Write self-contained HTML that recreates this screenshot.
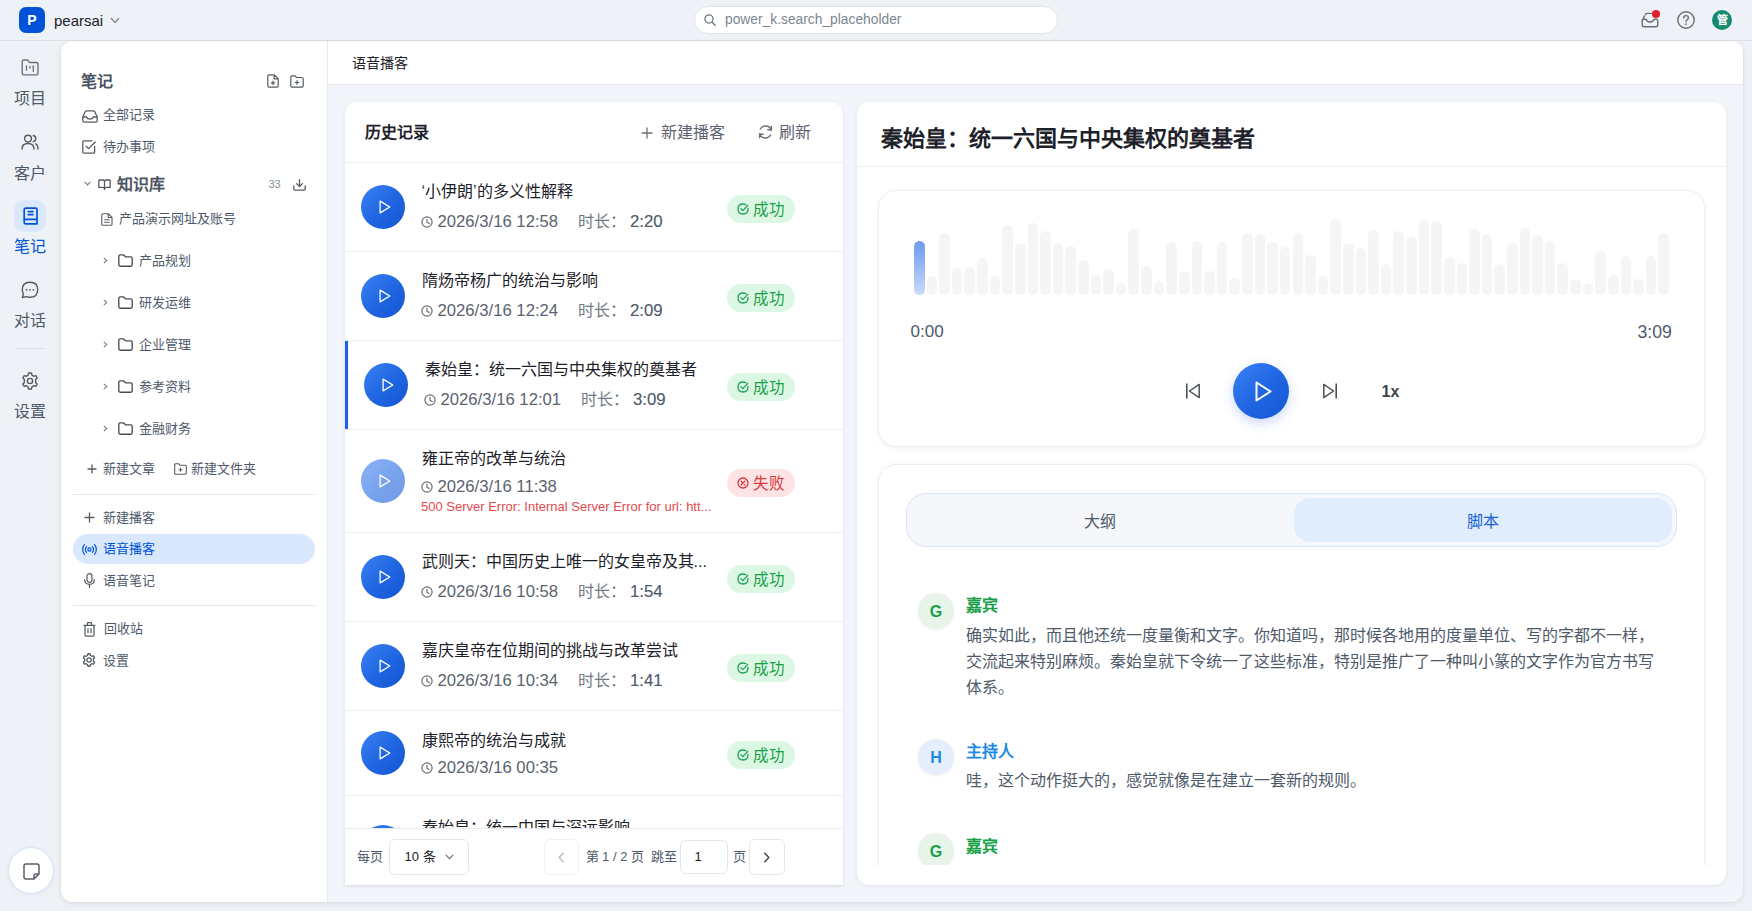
<!DOCTYPE html>
<html lang="zh-CN">
<head>
<meta charset="utf-8">
<style>
*{box-sizing:border-box;margin:0;padding:0}
html,body{width:1752px;height:911px;overflow:hidden}
body{position:relative;background:#eef1f6;font-family:"Liberation Sans",sans-serif;color:#1d2129}
.a{position:absolute}
.nw{white-space:nowrap}
svg{position:absolute;display:block;overflow:visible}
#hdr{left:0;top:0;width:1752px;height:41px;border-bottom:1px solid #dde1e6}
#app{left:61px;top:41px;width:1682px;height:861px;border-radius:12px;background:#f2f5f9;overflow:hidden;box-shadow:0 2px 6px rgba(0,0,0,.08),0 0 0 1px rgba(0,0,0,.02)}
#side{left:0;top:0;width:267px;height:861px;background:#fff;border-right:1px solid #e6e8eb}
#mainhdr{left:267px;top:0;width:1415px;height:44px;background:#fff;border-bottom:1px solid #e6e8eb}
.card{background:#fff;box-shadow:0 1px 4px rgba(0,0,0,.08)}
.row{position:absolute;left:345px;width:498px;border-bottom:1px solid #eceef1}
.pb{position:absolute;width:44px;height:44px;border-radius:50%;background:linear-gradient(135deg,#3a82f4 0%,#1f64e0 55%,#1556d3 100%)}
.badge{position:absolute;left:727px;width:68px;height:28px;border-radius:14px}
.ok{background:#dcf8e4}
.bad{background:#fde3e3}
.bar{position:absolute;display:block;width:10.6px;border-radius:5.3px;background:#f5f5f6}
.b1{background:linear-gradient(180deg,#6d9cf0 0%,#8fb3f3 40%,#c9dcfa 100%)}
.av{position:absolute;left:918px;width:36px;height:36px;border-radius:50%;text-align:center;font-weight:bold;font-size:16px;line-height:37px;box-shadow:0 1px 3px rgba(0,0,0,.06)}
.para{position:absolute;left:966px;width:699px;font-size:16px;line-height:26px;color:#4e5969}
</style>
</head>
<body>
<div class="a" id="hdr"></div>
<div class="a" style="left:19px;top:7px;width:26px;height:26px;border-radius:7px;background:#0052d9;color:#fff;font-weight:bold;font-size:14px;line-height:26px;text-align:center">P</div>
<div class="a nw" style="left:54px;top:12px;font-size:15px;line-height:18px;color:#1d2129">pearsai</div>
<svg style="left:110px;top:16.7px" width="10" height="7" viewBox="0 0 10 7"><path d="M1 1.2 L5 5.4 L9 1.2" fill="none" stroke="#6b7280" stroke-width="1.2"/></svg>
<div class="a" style="left:694px;top:6px;width:364px;height:28px;border-radius:14px;background:#fff;border:1px solid #dfe2e7"></div>
<svg style="left:704px;top:14px" width="12" height="12" viewBox="0 0 12 12"><circle cx="5" cy="5" r="4.1" fill="none" stroke="#6b7280" stroke-width="1.3"/><path d="M8 8 L11.2 11.2" stroke="#6b7280" stroke-width="1.4" stroke-linecap="round"/></svg>
<div class="a nw" style="left:725px;top:12px;font-size:13.8px;line-height:16px;color:#7d8590">power_k.search_placeholder</div>
<svg style="left:1641px;top:12px" width="18" height="16" viewBox="0 0 18 16"><path d="M4 3.2 Q4.6 1.4 6.5 1.4 L11 1.4 M1.2 8.8 L1.2 12.8 Q1.2 14.8 3.2 14.8 L14.8 14.8 Q16.8 14.8 16.8 12.8 L16.8 8.8 Q16.8 7.2 15.3 7.2 L13 7.2 Q12 10 9 10 Q6 10 5 7.2 L2.7 7.2 Q1.2 7.2 1.2 8.8 Z M1.2 8.8 L3.5 3.6" fill="none" stroke="#6b6f76" stroke-width="1.4" stroke-linejoin="round"/></svg>
<div class="a" style="left:1651.8px;top:9.8px;width:8.4px;height:8.4px;border-radius:50%;background:#e0202a"></div>
<svg style="left:1677px;top:11px" width="18" height="18" viewBox="0 0 18 18"><circle cx="9" cy="9" r="8.2" fill="none" stroke="#6b6f76" stroke-width="1.4"/><path d="M6.6 6.9 Q6.6 4.6 9 4.6 Q11.4 4.6 11.4 6.7 Q11.4 8.1 10 8.8 Q9 9.3 9 10.6" fill="none" stroke="#6b6f76" stroke-width="1.4" stroke-linecap="round"/><circle cx="9" cy="13.2" r="0.9" fill="#6b6f76"/></svg>
<div class="a" style="left:1712px;top:10px;width:20px;height:20px;border-radius:50%;background:#168a70;color:#fff;font-size:11px;line-height:20px;text-align:center;font-weight:bold">管</div>
<svg style="left:21px;top:59px" width="18" height="16" viewBox="0 0 18 16"><path d="M1.2 2.6 Q1.2 1 2.8 1 L6 1 Q6.8 1 7.3 1.7 L8 2.9 Q8.4 3.5 9.2 3.5 L15.4 3.5 Q17 3.5 17 5.1 L17 14.2 Q17 15.8 15.4 15.8 L2.8 15.8 Q1.2 15.8 1.2 14.2 Z" fill="none" stroke="#6b7078" stroke-width="1.35" stroke-linejoin="round"/><path d="M5.5 6.8 L5.5 11.2 M9 7.3 L9 9.2 M12.3 6.8 L12.3 12.4" fill="none" stroke="#6b7078" stroke-width="1.3" stroke-linecap="round"/></svg>
<div class="a nw" style="left:14px;top:91.0px;font-size:16px;line-height:16px;color:#4e5969;">项目</div>
<svg style="left:21px;top:134px" width="18" height="16" viewBox="0 0 18 16"><circle cx="7" cy="4.6" r="3.4" fill="none" stroke="#555b63" stroke-width="1.4"/><path d="M1 15 Q1 9.5 7 9.5 Q13 9.5 13 15 M12.3 1.5 Q14.8 2.2 14.8 4.6 Q14.8 7 12.3 7.7 M14.5 9.8 Q17 10.8 17 15" fill="none" stroke="#555b63" stroke-width="1.4" stroke-linecap="round"/></svg>
<div class="a nw" style="left:14px;top:165.5px;font-size:16px;line-height:16px;color:#4e5969;">客户</div>
<div class="a" style="left:14px;top:200px;width:32px;height:32px;border-radius:10px;background:#dbe8fc"></div>
<svg style="left:22.5px;top:206.5px" width="15" height="18" viewBox="0 0 15 18"><path d="M2.8 1.2 L12.8 1.2 Q14 1.2 14 2.4 L14 16.8 L2.6 16.8 Q1.2 16.8 1.2 15.2 L1.2 2.8 Q1.2 1.2 2.8 1.2 Z M1.2 13.6 Q1.2 12.4 2.6 12.4 L14 12.4 M4.6 4.6 L10.6 4.6 M4.6 7.6 L10.6 7.6" fill="none" stroke="#0052d9" stroke-width="1.7" stroke-linejoin="round"/></svg>
<div class="a nw" style="left:14px;top:239.0px;font-size:16px;line-height:16px;color:#0052d9;">笔记</div>
<svg style="left:21px;top:281px" width="18" height="18" viewBox="0 0 18 18"><path d="M9 1.3 Q16.7 1.3 16.7 8.8 Q16.7 16.3 9 16.3 Q7 16.3 5.2 15.6 L1.4 16.6 L2.4 13 Q1.3 11 1.3 8.8 Q1.3 1.3 9 1.3 Z" fill="none" stroke="#555b63" stroke-width="1.4" stroke-linejoin="round"/><circle cx="5.6" cy="8.8" r="0.9" fill="#555b63"/><circle cx="9" cy="8.8" r="0.9" fill="#555b63"/><circle cx="12.4" cy="8.8" r="0.9" fill="#555b63"/></svg>
<div class="a nw" style="left:14px;top:313.0px;font-size:16px;line-height:16px;color:#4e5969;">对话</div>
<div class="a" style="left:16px;top:348px;width:28px;height:1px;background:#d9dde3"></div>
<svg style="left:21px;top:372px" width="18" height="18" viewBox="0 0 18 18"><path d="M7.6 1 L10.4 1 L10.9 3.2 Q11.9 3.6 12.7 4.3 L14.8 3.6 L16.2 6 L14.6 7.6 Q14.8 9 14.6 10.4 L16.2 12 L14.8 14.4 L12.7 13.7 Q11.9 14.4 10.9 14.8 L10.4 17 L7.6 17 L7.1 14.8 Q6.1 14.4 5.3 13.7 L3.2 14.4 L1.8 12 L3.4 10.4 Q3.2 9 3.4 7.6 L1.8 6 L3.2 3.6 L5.3 4.3 Q6.1 3.6 7.1 3.2 Z" fill="none" stroke="#555b63" stroke-width="1.4" stroke-linejoin="round"/><circle cx="9" cy="9" r="2.6" fill="none" stroke="#555b63" stroke-width="1.4"/></svg>
<div class="a nw" style="left:14px;top:404.0px;font-size:16px;line-height:16px;color:#4e5969;">设置</div>
<div class="a" style="left:8px;top:847px;width:46px;height:47px;border-radius:50%;background:#fff;border:1px solid #d3e2fb;box-shadow:0 1px 4px rgba(0,0,0,.05)"></div>
<svg style="left:22.5px;top:862.5px" width="17" height="17" viewBox="0 0 17 17"><path d="M3 1 L14 1 Q16 1 16 3 L16 11 L11 16 L3 16 Q1 16 1 14 L1 3 Q1 1 3 1 Z M16 11 L13 11 Q11 11 11 13 L11 16" fill="none" stroke="#5a6069" stroke-width="1.5" stroke-linejoin="round"/></svg>
<div class="a" id="app"><div class="a" id="side"></div><div class="a" id="mainhdr"></div></div>
<div class="a nw" style="left:81px;top:74.0px;font-size:16px;line-height:16px;color:#4b5563;font-weight:bold;">笔记</div>
<svg style="left:266.5px;top:74px" width="12" height="14" viewBox="0 0 12 14"><path d="M1.8 0.8 L7.4 0.8 L11.2 4.6 L11.2 12 Q11.2 13.2 10 13.2 L2 13.2 Q0.8 13.2 0.8 12 L0.8 2 Q0.8 0.8 1.8 0.8 Z M7.2 0.8 L7.2 4.8 L11.2 4.8 M6 6.8 L6 11 M3.9 8.9 L8.1 8.9" fill="none" stroke="#555b63" stroke-width="1.2" stroke-linejoin="round"/></svg>
<svg style="left:289.5px;top:74.5px" width="14" height="13" viewBox="0 0 14 13"><path d="M0.8 2 Q0.8 0.8 2 0.8 L5 0.8 L6.5 2.5 L12 2.5 Q13.2 2.5 13.2 3.7 L13.2 11 Q13.2 12.2 12 12.2 L2 12.2 Q0.8 12.2 0.8 11 Z M7 5.3 L7 9.7 M4.8 7.5 L9.2 7.5" fill="none" stroke="#555b63" stroke-width="1.2" stroke-linejoin="round"/></svg>
<svg style="left:81.5px;top:109.5px" width="16" height="13" viewBox="0 0 16 13"><path d="M0.8 7 L0.8 10.6 Q0.8 12.2 2.4 12.2 L13.6 12.2 Q15.2 12.2 15.2 10.6 L15.2 7 L12.8 1.8 Q12.3 0.8 11.2 0.8 L4.8 0.8 Q3.7 0.8 3.2 1.8 Z M0.8 7 L4.6 7 Q5.4 9.2 8 9.2 Q10.6 9.2 11.4 7 L15.2 7" fill="none" stroke="#555b63" stroke-width="1.3" stroke-linejoin="round"/></svg>
<div class="a nw" style="left:103px;top:108px;font-size:13px;line-height:13px;color:#4e5969;">全部记录</div>
<svg style="left:82px;top:140px" width="14" height="14" viewBox="0 0 14 14"><path d="M12.6 6.5 L12.6 12 Q12.6 13.2 11.4 13.2 L2 13.2 Q0.8 13.2 0.8 12 L0.8 2 Q0.8 0.8 2 0.8 L10 0.8 M4.2 6.2 L6.6 8.6 L13.2 2" fill="none" stroke="#555b63" stroke-width="1.3" stroke-linejoin="round" stroke-linecap="round"/></svg>
<div class="a nw" style="left:103px;top:140px;font-size:13px;line-height:13px;color:#4e5969;">待办事项</div>
<svg style="left:84px;top:181px" width="7" height="5" viewBox="0 0 7 5"><path d="M0.6 0.8 L3.5 3.9 L6.4 0.8" fill="none" stroke="#7a7f87" stroke-width="1.1"/></svg>
<svg style="left:97.5px;top:178.5px" width="13" height="11" viewBox="0 0 13 11"><path d="M0.8 1 L4.6 1 Q6.5 1 6.5 2.8 L6.5 10.5 M12.2 1 L8.4 1 Q6.5 1 6.5 2.8 M0.8 1 L0.8 8.4 L4.6 8.4 Q6.5 8.4 6.5 10.4 Q6.5 8.4 8.4 8.4 L12.2 8.4 L12.2 1" fill="none" stroke="#555b63" stroke-width="1.3" stroke-linejoin="round"/></svg>
<div class="a nw" style="left:116.5px;top:176.5px;font-size:16px;line-height:16px;color:#4b5563;font-weight:bold;">知识库</div>
<div class="a nw" style="left:268.5px;top:178px;font-size:11px;line-height:12px;color:#86909c">33</div>
<svg style="left:293px;top:178.5px" width="13" height="12" viewBox="0 0 13 12"><path d="M6.5 0.6 L6.5 7.4 M3.6 4.6 L6.5 7.5 L9.4 4.6 M0.8 6.8 L0.8 9.8 Q0.8 11.2 2.2 11.2 L10.8 11.2 Q12.2 11.2 12.2 9.8 L12.2 6.8" fill="none" stroke="#555b63" stroke-width="1.3" stroke-linejoin="round" stroke-linecap="round"/></svg>
<svg style="left:100.5px;top:212.5px" width="12" height="13" viewBox="0 0 12 13"><path d="M1.8 0.7 L7.3 0.7 L11 4.4 L11 11.4 Q11 12.3 10 12.3 L1.8 12.3 Q0.8 12.3 0.8 11.3 L0.8 1.7 Q0.8 0.7 1.8 0.7 Z M7.2 0.7 L7.2 4.5 L11 4.5 M3.2 6.8 L8.6 6.8 M3.2 9.2 L8.6 9.2" fill="none" stroke="#555b63" stroke-width="1.1" stroke-linejoin="round"/></svg>
<div class="a nw" style="left:119px;top:211.5px;font-size:13px;line-height:13px;color:#4e5969;">产品演示网址及账号</div>
<svg style="left:102.5px;top:257px" width="5" height="7" viewBox="0 0 5 7"><path d="M0.8 0.8 L3.8 3.5 L0.8 6.2" fill="none" stroke="#7a7f87" stroke-width="1.1"/></svg>
<svg style="left:117.5px;top:254px" width="15" height="13" viewBox="0 0 15 13"><path d="M0.8 2.3 Q0.8 0.8 2.3 0.8 L5 0.8 Q5.8 0.8 6.3 1.5 L6.8 2.2 Q7.2 2.8 8 2.8 L12.7 2.8 Q14.2 2.8 14.2 4.3 L14.2 10.8 Q14.2 12.2 12.7 12.2 L2.3 12.2 Q0.8 12.2 0.8 10.8 Z" fill="none" stroke="#474d55" stroke-width="1.35" stroke-linejoin="round"/></svg>
<div class="a nw" style="left:139px;top:253.5px;font-size:13px;line-height:13px;color:#4e5969;">产品规划</div>
<svg style="left:102.5px;top:299px" width="5" height="7" viewBox="0 0 5 7"><path d="M0.8 0.8 L3.8 3.5 L0.8 6.2" fill="none" stroke="#7a7f87" stroke-width="1.1"/></svg>
<svg style="left:117.5px;top:296px" width="15" height="13" viewBox="0 0 15 13"><path d="M0.8 2.3 Q0.8 0.8 2.3 0.8 L5 0.8 Q5.8 0.8 6.3 1.5 L6.8 2.2 Q7.2 2.8 8 2.8 L12.7 2.8 Q14.2 2.8 14.2 4.3 L14.2 10.8 Q14.2 12.2 12.7 12.2 L2.3 12.2 Q0.8 12.2 0.8 10.8 Z" fill="none" stroke="#474d55" stroke-width="1.35" stroke-linejoin="round"/></svg>
<div class="a nw" style="left:139px;top:295.5px;font-size:13px;line-height:13px;color:#4e5969;">研发运维</div>
<svg style="left:102.5px;top:341px" width="5" height="7" viewBox="0 0 5 7"><path d="M0.8 0.8 L3.8 3.5 L0.8 6.2" fill="none" stroke="#7a7f87" stroke-width="1.1"/></svg>
<svg style="left:117.5px;top:338px" width="15" height="13" viewBox="0 0 15 13"><path d="M0.8 2.3 Q0.8 0.8 2.3 0.8 L5 0.8 Q5.8 0.8 6.3 1.5 L6.8 2.2 Q7.2 2.8 8 2.8 L12.7 2.8 Q14.2 2.8 14.2 4.3 L14.2 10.8 Q14.2 12.2 12.7 12.2 L2.3 12.2 Q0.8 12.2 0.8 10.8 Z" fill="none" stroke="#474d55" stroke-width="1.35" stroke-linejoin="round"/></svg>
<div class="a nw" style="left:139px;top:337.5px;font-size:13px;line-height:13px;color:#4e5969;">企业管理</div>
<svg style="left:102.5px;top:383px" width="5" height="7" viewBox="0 0 5 7"><path d="M0.8 0.8 L3.8 3.5 L0.8 6.2" fill="none" stroke="#7a7f87" stroke-width="1.1"/></svg>
<svg style="left:117.5px;top:380px" width="15" height="13" viewBox="0 0 15 13"><path d="M0.8 2.3 Q0.8 0.8 2.3 0.8 L5 0.8 Q5.8 0.8 6.3 1.5 L6.8 2.2 Q7.2 2.8 8 2.8 L12.7 2.8 Q14.2 2.8 14.2 4.3 L14.2 10.8 Q14.2 12.2 12.7 12.2 L2.3 12.2 Q0.8 12.2 0.8 10.8 Z" fill="none" stroke="#474d55" stroke-width="1.35" stroke-linejoin="round"/></svg>
<div class="a nw" style="left:139px;top:379.5px;font-size:13px;line-height:13px;color:#4e5969;">参考资料</div>
<svg style="left:102.5px;top:425px" width="5" height="7" viewBox="0 0 5 7"><path d="M0.8 0.8 L3.8 3.5 L0.8 6.2" fill="none" stroke="#7a7f87" stroke-width="1.1"/></svg>
<svg style="left:117.5px;top:422px" width="15" height="13" viewBox="0 0 15 13"><path d="M0.8 2.3 Q0.8 0.8 2.3 0.8 L5 0.8 Q5.8 0.8 6.3 1.5 L6.8 2.2 Q7.2 2.8 8 2.8 L12.7 2.8 Q14.2 2.8 14.2 4.3 L14.2 10.8 Q14.2 12.2 12.7 12.2 L2.3 12.2 Q0.8 12.2 0.8 10.8 Z" fill="none" stroke="#474d55" stroke-width="1.35" stroke-linejoin="round"/></svg>
<div class="a nw" style="left:139px;top:421.5px;font-size:13px;line-height:13px;color:#4e5969;">金融财务</div>
<svg style="left:87px;top:463.5px" width="10" height="10" viewBox="0 0 10 10"><path d="M5 0.5 L5 9.5 M0.5 5 L9.5 5" stroke="#555b63" stroke-width="1.3"/></svg>
<div class="a nw" style="left:102.5px;top:461.5px;font-size:13px;line-height:13px;color:#4e5969;">新建文章</div>
<svg style="left:173.5px;top:463px" width="13" height="12" viewBox="0 0 13 12"><path d="M0.7 1.9 Q0.7 0.7 1.9 0.7 L4.6 0.7 L6 2.3 L11.1 2.3 Q12.3 2.3 12.3 3.5 L12.3 10.1 Q12.3 11.3 11.1 11.3 L1.9 11.3 Q0.7 11.3 0.7 10.1 Z M6.5 4.8 L6.5 8.8 M4.5 6.8 L8.5 6.8" fill="none" stroke="#555b63" stroke-width="1.1" stroke-linejoin="round"/></svg>
<div class="a nw" style="left:190.5px;top:461.5px;font-size:13px;line-height:13px;color:#4e5969;">新建文件夹</div>
<div class="a" style="left:73px;top:494px;width:242px;height:1px;background:#e5e7eb"></div>
<svg style="left:83.5px;top:512px" width="11" height="11" viewBox="0 0 11 11"><path d="M5.5 0.5 L5.5 10.5 M0.5 5.5 L10.5 5.5" stroke="#555b63" stroke-width="1.3"/></svg>
<div class="a nw" style="left:103px;top:510.5px;font-size:13px;line-height:13px;color:#4e5969;">新建播客</div>
<div class="a" style="left:73px;top:534px;width:242px;height:30px;border-radius:15px;background:#d9e8fd"></div>
<svg style="left:81.5px;top:543.5px" width="15" height="11" viewBox="0 0 15 11"><circle cx="7.5" cy="5.5" r="1.6" fill="none" stroke="#0052d9" stroke-width="1.2"/><path d="M4.6 2.6 Q3.4 3.8 3.4 5.5 Q3.4 7.2 4.6 8.4 M10.4 2.6 Q11.6 3.8 11.6 5.5 Q11.6 7.2 10.4 8.4 M2.4 0.6 Q0.7 2.6 0.7 5.5 Q0.7 8.4 2.4 10.4 M12.6 0.6 Q14.3 2.6 14.3 5.5 Q14.3 8.4 12.6 10.4" fill="none" stroke="#0052d9" stroke-width="1.2" stroke-linecap="round"/></svg>
<div class="a nw" style="left:103px;top:541.5px;font-size:13px;line-height:13px;color:#0052d9;">语音播客</div>
<svg style="left:84px;top:572.5px" width="11" height="15" viewBox="0 0 11 15"><rect x="3" y="0.7" width="5" height="8.6" rx="2.5" fill="none" stroke="#555b63" stroke-width="1.2"/><path d="M0.7 6.6 Q0.7 11.4 5.5 11.4 Q10.3 11.4 10.3 6.6 M5.5 11.4 L5.5 14.4" fill="none" stroke="#555b63" stroke-width="1.2" stroke-linecap="round"/></svg>
<div class="a nw" style="left:103px;top:573.5px;font-size:13px;line-height:13px;color:#4e5969;">语音笔记</div>
<div class="a" style="left:73px;top:605px;width:242px;height:1px;background:#e5e7eb"></div>
<svg style="left:82.5px;top:621.5px" width="13" height="15" viewBox="0 0 13 15"><path d="M0.6 3.3 L12.4 3.3 M4.4 3.3 L4.4 1.5 Q4.4 0.7 5.2 0.7 L7.8 0.7 Q8.6 0.7 8.6 1.5 L8.6 3.3 M2 3.3 L2 13 Q2 14.2 3.2 14.2 L9.8 14.2 Q11 14.2 11 13 L11 3.3 M5 6.3 L5 11 M8 6.3 L8 11" fill="none" stroke="#555b63" stroke-width="1.25" stroke-linejoin="round"/></svg>
<div class="a nw" style="left:103.5px;top:621.5px;font-size:13px;line-height:13px;color:#4e5969;">回收站</div>
<svg style="left:82px;top:653px" width="14" height="14" viewBox="0 0 18 18"><path d="M7.6 1 L10.4 1 L10.9 3.2 Q11.9 3.6 12.7 4.3 L14.8 3.6 L16.2 6 L14.6 7.6 Q14.8 9 14.6 10.4 L16.2 12 L14.8 14.4 L12.7 13.7 Q11.9 14.4 10.9 14.8 L10.4 17 L7.6 17 L7.1 14.8 Q6.1 14.4 5.3 13.7 L3.2 14.4 L1.8 12 L3.4 10.4 Q3.2 9 3.4 7.6 L1.8 6 L3.2 3.6 L5.3 4.3 Q6.1 3.6 7.1 3.2 Z" fill="none" stroke="#555b63" stroke-width="1.7" stroke-linejoin="round"/><circle cx="9" cy="9" r="2.8" fill="none" stroke="#555b63" stroke-width="1.7"/></svg>
<div class="a nw" style="left:103px;top:653.5px;font-size:13px;line-height:13px;color:#4e5969;">设置</div>
<div class="a nw" style="left:352px;top:56.0px;font-size:14px;line-height:14px;color:#1d2129;">语音播客</div>
<div class="a card" style="left:345px;top:102px;width:498px;height:783px;border-radius:12px 12px 0 0"></div>
<div class="a nw" style="left:365px;top:125.0px;font-size:16px;line-height:16px;color:#1d2129;font-weight:bold;">历史记录</div>
<svg style="left:641px;top:126.5px" width="12" height="12" viewBox="0 0 12 12"><path d="M6 0.5 L6 11.5 M0.5 6 L11.5 6" stroke="#6b7078" stroke-width="1.3"/></svg>
<div class="a nw" style="left:660.5px;top:125.0px;font-size:16px;line-height:16px;color:#5c6370;">新建播客</div>
<svg style="left:757.5px;top:125px" width="15" height="14" viewBox="0 0 15 14"><path d="M13.2 5.6 Q12.4 1 7.5 1 Q4 1 2.3 4 M1.8 8.4 Q2.6 13 7.5 13 Q11 13 12.7 10 M13.4 1.2 L13.4 4.8 L9.8 4.8 M1.6 12.8 L1.6 9.2 L5.2 9.2" fill="none" stroke="#6b7078" stroke-width="1.4" stroke-linejoin="round" stroke-linecap="round"/></svg>
<div class="a nw" style="left:779px;top:125.0px;font-size:16px;line-height:16px;color:#5c6370;">刷新</div>
<div class="a" style="left:345px;top:162px;width:498px;height:1px;background:#eceef1"></div>
<div class="row" style="top:163px;height:89px"></div>
<div class="pb" style="left:361px;top:185.0px;"></div>
<svg style="left:379px;top:200.0px" width="12" height="14" viewBox="0 0 12 14"><path d="M1.1 1.1 L10.8 7 L1.1 12.9 Z" fill="none" stroke="#fff" stroke-width="1.3" stroke-linejoin="round"/></svg>
<div class="a nw" style="left:421.5px;top:184.0px;font-size:16px;line-height:16px;color:#1d2129;">‘小伊朗’的多义性解释</div>
<svg style="left:421px;top:215.5px" width="12" height="12" viewBox="0 0 12 12"><circle cx="6" cy="6" r="5.1" fill="none" stroke="#6b7078" stroke-width="1.2"/><path d="M6 3 L6 6.2 L8.2 7.6" fill="none" stroke="#6b7078" stroke-width="1.2" stroke-linecap="round" stroke-linejoin="round"/></svg>
<div class="a nw" style="left:437.5px;top:212.0px;font-size:16.7px;line-height:19px;color:#5c6370">2026/3/16 12:58</div>
<div class="a nw" style="left:577.5px;top:214.0px;font-size:16px;line-height:16px;color:#737a84;">时长：</div>
<div class="a nw" style="left:630px;top:212.0px;font-size:16.8px;line-height:19px;color:#4e5969;-webkit-text-stroke:0.15px #4e5969">2:20</div>
<div class="badge ok" style="top:195.0px"></div>
<svg style="left:737px;top:203.0px" width="12" height="12" viewBox="0 0 12 12"><path d="M11 5.4 L11 6 Q11 11 6 11 Q1 11 1 6 Q1 1 6 1 Q7.6 1 9 1.8" fill="none" stroke="#1fa153" stroke-width="1.3" stroke-linecap="round"/><path d="M3.8 5.6 L5.8 7.6 L10.8 2.4" fill="none" stroke="#1fa153" stroke-width="1.3" stroke-linecap="round" stroke-linejoin="round"/></svg>
<div class="a nw" style="left:753px;top:201.5px;font-size:15.5px;line-height:15.5px;color:#18a048;">成功</div>
<div class="row" style="top:252px;height:89px"></div>
<div class="pb" style="left:361px;top:274.0px;"></div>
<svg style="left:379px;top:289.0px" width="12" height="14" viewBox="0 0 12 14"><path d="M1.1 1.1 L10.8 7 L1.1 12.9 Z" fill="none" stroke="#fff" stroke-width="1.3" stroke-linejoin="round"/></svg>
<div class="a nw" style="left:421.5px;top:273.0px;font-size:16px;line-height:16px;color:#1d2129;">隋炀帝杨广的统治与影响</div>
<svg style="left:421px;top:304.5px" width="12" height="12" viewBox="0 0 12 12"><circle cx="6" cy="6" r="5.1" fill="none" stroke="#6b7078" stroke-width="1.2"/><path d="M6 3 L6 6.2 L8.2 7.6" fill="none" stroke="#6b7078" stroke-width="1.2" stroke-linecap="round" stroke-linejoin="round"/></svg>
<div class="a nw" style="left:437.5px;top:301.0px;font-size:16.7px;line-height:19px;color:#5c6370">2026/3/16 12:24</div>
<div class="a nw" style="left:577.5px;top:303.0px;font-size:16px;line-height:16px;color:#737a84;">时长：</div>
<div class="a nw" style="left:630px;top:301.0px;font-size:16.8px;line-height:19px;color:#4e5969;-webkit-text-stroke:0.15px #4e5969">2:09</div>
<div class="badge ok" style="top:284.0px"></div>
<svg style="left:737px;top:292.0px" width="12" height="12" viewBox="0 0 12 12"><path d="M11 5.4 L11 6 Q11 11 6 11 Q1 11 1 6 Q1 1 6 1 Q7.6 1 9 1.8" fill="none" stroke="#1fa153" stroke-width="1.3" stroke-linecap="round"/><path d="M3.8 5.6 L5.8 7.6 L10.8 2.4" fill="none" stroke="#1fa153" stroke-width="1.3" stroke-linecap="round" stroke-linejoin="round"/></svg>
<div class="a nw" style="left:753px;top:290.5px;font-size:15.5px;line-height:15.5px;color:#18a048;">成功</div>
<div class="row" style="top:341px;height:89px"></div>
<div class="a" style="left:345px;top:341px;width:3px;height:88px;background:#1f5ef0"></div>
<div class="pb" style="left:364px;top:363.0px;"></div>
<svg style="left:382px;top:378.0px" width="12" height="14" viewBox="0 0 12 14"><path d="M1.1 1.1 L10.8 7 L1.1 12.9 Z" fill="none" stroke="#fff" stroke-width="1.3" stroke-linejoin="round"/></svg>
<div class="a nw" style="left:424.5px;top:362.0px;font-size:16px;line-height:16px;color:#1d2129;">秦始皇：统一六国与中央集权的奠基者</div>
<svg style="left:424px;top:393.5px" width="12" height="12" viewBox="0 0 12 12"><circle cx="6" cy="6" r="5.1" fill="none" stroke="#6b7078" stroke-width="1.2"/><path d="M6 3 L6 6.2 L8.2 7.6" fill="none" stroke="#6b7078" stroke-width="1.2" stroke-linecap="round" stroke-linejoin="round"/></svg>
<div class="a nw" style="left:440.5px;top:390.0px;font-size:16.7px;line-height:19px;color:#5c6370">2026/3/16 12:01</div>
<div class="a nw" style="left:580.5px;top:392.0px;font-size:16px;line-height:16px;color:#737a84;">时长：</div>
<div class="a nw" style="left:633px;top:390.0px;font-size:16.8px;line-height:19px;color:#4e5969;-webkit-text-stroke:0.15px #4e5969">3:09</div>
<div class="badge ok" style="top:373.0px"></div>
<svg style="left:737px;top:381.0px" width="12" height="12" viewBox="0 0 12 12"><path d="M11 5.4 L11 6 Q11 11 6 11 Q1 11 1 6 Q1 1 6 1 Q7.6 1 9 1.8" fill="none" stroke="#1fa153" stroke-width="1.3" stroke-linecap="round"/><path d="M3.8 5.6 L5.8 7.6 L10.8 2.4" fill="none" stroke="#1fa153" stroke-width="1.3" stroke-linecap="round" stroke-linejoin="round"/></svg>
<div class="a nw" style="left:753px;top:379.5px;font-size:15.5px;line-height:15.5px;color:#18a048;">成功</div>
<div class="row" style="top:430px;height:103px"></div>
<div class="pb" style="left:361px;top:459.0px;opacity:.6;"></div>
<svg style="left:379px;top:474.0px" width="12" height="14" viewBox="0 0 12 14"><path d="M1.1 1.1 L10.8 7 L1.1 12.9 Z" fill="none" stroke="#fff" stroke-width="1.3" stroke-linejoin="round"/></svg>
<div class="a nw" style="left:421.5px;top:451.0px;font-size:16px;line-height:16px;color:#1d2129;">雍正帝的改革与统治</div>
<svg style="left:421px;top:480.5px" width="12" height="12" viewBox="0 0 12 12"><circle cx="6" cy="6" r="5.1" fill="none" stroke="#6b7078" stroke-width="1.2"/><path d="M6 3 L6 6.2 L8.2 7.6" fill="none" stroke="#6b7078" stroke-width="1.2" stroke-linecap="round" stroke-linejoin="round"/></svg>
<div class="a nw" style="left:437.5px;top:477.0px;font-size:16.7px;line-height:19px;color:#5c6370">2026/3/16 11:38</div>
<div class="a nw" style="left:421px;top:498.5px;font-size:13px;line-height:15px;color:#e5484d">500 Server Error: Internal Server Error for url: htt...</div>
<div class="badge bad" style="top:469.0px"></div>
<svg style="left:737px;top:477.0px" width="12" height="12" viewBox="0 0 12 12"><circle cx="6" cy="6" r="5" fill="none" stroke="#d9363e" stroke-width="1.3"/><path d="M4.2 4.2 L7.8 7.8 M7.8 4.2 L4.2 7.8" stroke="#d9363e" stroke-width="1.3" stroke-linecap="round"/></svg>
<div class="a nw" style="left:753px;top:475.5px;font-size:15.5px;line-height:15.5px;color:#d9363e;">失败</div>
<div class="row" style="top:533px;height:89px"></div>
<div class="pb" style="left:361px;top:555.0px;"></div>
<svg style="left:379px;top:570.0px" width="12" height="14" viewBox="0 0 12 14"><path d="M1.1 1.1 L10.8 7 L1.1 12.9 Z" fill="none" stroke="#fff" stroke-width="1.3" stroke-linejoin="round"/></svg>
<div class="a nw" style="left:421.5px;top:554.0px;font-size:16px;line-height:16px;color:#1d2129;">武则天：中国历史上唯一的女皇帝及其...</div>
<svg style="left:421px;top:585.5px" width="12" height="12" viewBox="0 0 12 12"><circle cx="6" cy="6" r="5.1" fill="none" stroke="#6b7078" stroke-width="1.2"/><path d="M6 3 L6 6.2 L8.2 7.6" fill="none" stroke="#6b7078" stroke-width="1.2" stroke-linecap="round" stroke-linejoin="round"/></svg>
<div class="a nw" style="left:437.5px;top:582.0px;font-size:16.7px;line-height:19px;color:#5c6370">2026/3/16 10:58</div>
<div class="a nw" style="left:577.5px;top:584.0px;font-size:16px;line-height:16px;color:#737a84;">时长：</div>
<div class="a nw" style="left:630px;top:582.0px;font-size:16.8px;line-height:19px;color:#4e5969;-webkit-text-stroke:0.15px #4e5969">1:54</div>
<div class="badge ok" style="top:565.0px"></div>
<svg style="left:737px;top:573.0px" width="12" height="12" viewBox="0 0 12 12"><path d="M11 5.4 L11 6 Q11 11 6 11 Q1 11 1 6 Q1 1 6 1 Q7.6 1 9 1.8" fill="none" stroke="#1fa153" stroke-width="1.3" stroke-linecap="round"/><path d="M3.8 5.6 L5.8 7.6 L10.8 2.4" fill="none" stroke="#1fa153" stroke-width="1.3" stroke-linecap="round" stroke-linejoin="round"/></svg>
<div class="a nw" style="left:753px;top:571.5px;font-size:15.5px;line-height:15.5px;color:#18a048;">成功</div>
<div class="row" style="top:622px;height:89px"></div>
<div class="pb" style="left:361px;top:644.0px;"></div>
<svg style="left:379px;top:659.0px" width="12" height="14" viewBox="0 0 12 14"><path d="M1.1 1.1 L10.8 7 L1.1 12.9 Z" fill="none" stroke="#fff" stroke-width="1.3" stroke-linejoin="round"/></svg>
<div class="a nw" style="left:421.5px;top:643.0px;font-size:16px;line-height:16px;color:#1d2129;">嘉庆皇帝在位期间的挑战与改革尝试</div>
<svg style="left:421px;top:674.5px" width="12" height="12" viewBox="0 0 12 12"><circle cx="6" cy="6" r="5.1" fill="none" stroke="#6b7078" stroke-width="1.2"/><path d="M6 3 L6 6.2 L8.2 7.6" fill="none" stroke="#6b7078" stroke-width="1.2" stroke-linecap="round" stroke-linejoin="round"/></svg>
<div class="a nw" style="left:437.5px;top:671.0px;font-size:16.7px;line-height:19px;color:#5c6370">2026/3/16 10:34</div>
<div class="a nw" style="left:577.5px;top:673.0px;font-size:16px;line-height:16px;color:#737a84;">时长：</div>
<div class="a nw" style="left:630px;top:671.0px;font-size:16.8px;line-height:19px;color:#4e5969;-webkit-text-stroke:0.15px #4e5969">1:41</div>
<div class="badge ok" style="top:654.0px"></div>
<svg style="left:737px;top:662.0px" width="12" height="12" viewBox="0 0 12 12"><path d="M11 5.4 L11 6 Q11 11 6 11 Q1 11 1 6 Q1 1 6 1 Q7.6 1 9 1.8" fill="none" stroke="#1fa153" stroke-width="1.3" stroke-linecap="round"/><path d="M3.8 5.6 L5.8 7.6 L10.8 2.4" fill="none" stroke="#1fa153" stroke-width="1.3" stroke-linecap="round" stroke-linejoin="round"/></svg>
<div class="a nw" style="left:753px;top:660.5px;font-size:15.5px;line-height:15.5px;color:#18a048;">成功</div>
<div class="row" style="top:711px;height:85px"></div>
<div class="pb" style="left:361px;top:731.0px;"></div>
<svg style="left:379px;top:746.0px" width="12" height="14" viewBox="0 0 12 14"><path d="M1.1 1.1 L10.8 7 L1.1 12.9 Z" fill="none" stroke="#fff" stroke-width="1.3" stroke-linejoin="round"/></svg>
<div class="a nw" style="left:421.5px;top:733.0px;font-size:16px;line-height:16px;color:#1d2129;">康熙帝的统治与成就</div>
<svg style="left:421px;top:761.5px" width="12" height="12" viewBox="0 0 12 12"><circle cx="6" cy="6" r="5.1" fill="none" stroke="#6b7078" stroke-width="1.2"/><path d="M6 3 L6 6.2 L8.2 7.6" fill="none" stroke="#6b7078" stroke-width="1.2" stroke-linecap="round" stroke-linejoin="round"/></svg>
<div class="a nw" style="left:437.5px;top:758.0px;font-size:16.7px;line-height:19px;color:#5c6370">2026/3/16 00:35</div>
<div class="badge ok" style="top:741.0px"></div>
<svg style="left:737px;top:749.0px" width="12" height="12" viewBox="0 0 12 12"><path d="M11 5.4 L11 6 Q11 11 6 11 Q1 11 1 6 Q1 1 6 1 Q7.6 1 9 1.8" fill="none" stroke="#1fa153" stroke-width="1.3" stroke-linecap="round"/><path d="M3.8 5.6 L5.8 7.6 L10.8 2.4" fill="none" stroke="#1fa153" stroke-width="1.3" stroke-linecap="round" stroke-linejoin="round"/></svg>
<div class="a nw" style="left:753px;top:747.5px;font-size:15.5px;line-height:15.5px;color:#18a048;">成功</div>
<div class="a" style="left:345px;top:796px;width:498px;height:32px;overflow:hidden"><div class="pb" style="left:16px;top:29px"></div><div class="a nw" style="left:76.5px;top:23.5px;font-size:16px;line-height:16px;color:#1d2129">秦始皇：统一中国与深远影响</div></div>
<div class="a" style="left:345px;top:828px;width:498px;height:57px;background:#fff;border-top:1px solid #e8eaed;box-shadow:0 1px 3px rgba(0,0,0,.05)"></div>
<div class="a nw" style="left:357px;top:849.5px;font-size:13px;line-height:13px;color:#4e5969;">每页</div>
<div class="a" style="left:389px;top:839px;width:80px;height:36px;border-radius:6px;border:1px solid #e3e6ea;background:#fff"></div>
<div class="a nw" style="left:404.5px;top:849.5px;font-size:13px;line-height:13px;color:#1d2129;">10 条</div>
<svg style="left:444.5px;top:853.5px" width="9" height="6" viewBox="0 0 9 6"><path d="M0.8 0.8 L4.5 4.6 L8.2 0.8" fill="none" stroke="#6b7078" stroke-width="1.2"/></svg>
<div class="a" style="left:544px;top:839px;width:35px;height:36px;border-radius:6px;border:1px solid #eef0f2;background:#fff"></div>
<svg style="left:558px;top:851.5px" width="7" height="11" viewBox="0 0 7 11"><path d="M5.6 0.8 L1.2 5.5 L5.6 10.2" fill="none" stroke="#b8bcc4" stroke-width="1.3"/></svg>
<div class="a nw" style="left:585.5px;top:849.5px;font-size:13px;line-height:13px;color:#4e5969;">第 1 / 2 页</div>
<div class="a nw" style="left:650.5px;top:849.5px;font-size:13px;line-height:13px;color:#4e5969;">跳至</div>
<div class="a" style="left:680px;top:840px;width:48px;height:34px;border-radius:6px;border:1px solid #e3e6ea;background:#fff"></div>
<div class="a nw" style="left:694.5px;top:850px;font-size:13px;line-height:13px;color:#1d2129;">1</div>
<div class="a nw" style="left:732.5px;top:849.5px;font-size:13px;line-height:13px;color:#4e5969;">页</div>
<div class="a" style="left:749px;top:839px;width:36px;height:36px;border-radius:6px;border:1px solid #e3e6ea;background:#fff"></div>
<svg style="left:763px;top:851.5px" width="7" height="11" viewBox="0 0 7 11"><path d="M1.4 0.8 L5.8 5.5 L1.4 10.2" fill="none" stroke="#3d434b" stroke-width="1.4"/></svg>
<div class="a card" style="left:857px;top:102px;width:869px;height:783px;border-radius:12px"></div>
<div class="a nw" style="left:881px;top:127.5px;font-size:22px;line-height:22px;color:#1d2129;font-weight:bold;">秦始皇：统一六国与中央集权的奠基者</div>
<div class="a" style="left:857px;top:166px;width:869px;height:1px;background:#eceef1"></div>
<div class="a" style="left:878px;top:190px;width:827px;height:257px;border-radius:18px;background:#fff;border:1px solid #eceef1;box-shadow:0 2px 6px rgba(0,0,0,.05)"></div>
<i class="bar b1" style="left:914.00px;top:241px;height:54px"></i><i class="bar" style="left:926.62px;top:276px;height:19px"></i><i class="bar" style="left:939.23px;top:233px;height:62px"></i><i class="bar" style="left:951.85px;top:268px;height:27px"></i><i class="bar" style="left:964.47px;top:267px;height:28px"></i><i class="bar" style="left:977.09px;top:258px;height:37px"></i><i class="bar" style="left:989.70px;top:276px;height:19px"></i><i class="bar" style="left:1002.32px;top:225px;height:70px"></i><i class="bar" style="left:1014.94px;top:243px;height:52px"></i><i class="bar" style="left:1027.55px;top:223px;height:72px"></i><i class="bar" style="left:1040.17px;top:231px;height:64px"></i><i class="bar" style="left:1052.79px;top:243px;height:52px"></i><i class="bar" style="left:1065.40px;top:246px;height:49px"></i><i class="bar" style="left:1078.02px;top:260px;height:35px"></i><i class="bar" style="left:1090.64px;top:275px;height:20px"></i><i class="bar" style="left:1103.26px;top:269px;height:26px"></i><i class="bar" style="left:1115.87px;top:283px;height:12px"></i><i class="bar" style="left:1128.49px;top:229px;height:66px"></i><i class="bar" style="left:1141.11px;top:266px;height:29px"></i><i class="bar" style="left:1153.72px;top:281px;height:14px"></i><i class="bar" style="left:1166.34px;top:242px;height:53px"></i><i class="bar" style="left:1178.96px;top:271px;height:24px"></i><i class="bar" style="left:1191.57px;top:241px;height:54px"></i><i class="bar" style="left:1204.19px;top:271px;height:24px"></i><i class="bar" style="left:1216.81px;top:242px;height:53px"></i><i class="bar" style="left:1229.42px;top:278px;height:17px"></i><i class="bar" style="left:1242.04px;top:233px;height:62px"></i><i class="bar" style="left:1254.66px;top:234px;height:61px"></i><i class="bar" style="left:1267.28px;top:242px;height:53px"></i><i class="bar" style="left:1279.89px;top:247px;height:48px"></i><i class="bar" style="left:1292.51px;top:233px;height:62px"></i><i class="bar" style="left:1305.13px;top:255px;height:40px"></i><i class="bar" style="left:1317.74px;top:276px;height:19px"></i><i class="bar" style="left:1330.36px;top:219px;height:76px"></i><i class="bar" style="left:1342.98px;top:243px;height:52px"></i><i class="bar" style="left:1355.60px;top:248px;height:47px"></i><i class="bar" style="left:1368.21px;top:230px;height:65px"></i><i class="bar" style="left:1380.83px;top:264px;height:31px"></i><i class="bar" style="left:1393.45px;top:231px;height:64px"></i><i class="bar" style="left:1406.06px;top:237px;height:58px"></i><i class="bar" style="left:1418.68px;top:220px;height:75px"></i><i class="bar" style="left:1431.30px;top:221px;height:74px"></i><i class="bar" style="left:1443.91px;top:257px;height:38px"></i><i class="bar" style="left:1456.53px;top:263px;height:32px"></i><i class="bar" style="left:1469.15px;top:229px;height:66px"></i><i class="bar" style="left:1481.76px;top:234px;height:61px"></i><i class="bar" style="left:1494.38px;top:264px;height:31px"></i><i class="bar" style="left:1507.00px;top:243px;height:52px"></i><i class="bar" style="left:1519.62px;top:228px;height:67px"></i><i class="bar" style="left:1532.23px;top:235px;height:60px"></i><i class="bar" style="left:1544.85px;top:241px;height:54px"></i><i class="bar" style="left:1557.47px;top:263px;height:32px"></i><i class="bar" style="left:1570.08px;top:279px;height:16px"></i><i class="bar" style="left:1582.70px;top:283px;height:12px"></i><i class="bar" style="left:1595.32px;top:251px;height:44px"></i><i class="bar" style="left:1607.93px;top:275px;height:20px"></i><i class="bar" style="left:1620.55px;top:256px;height:39px"></i><i class="bar" style="left:1633.17px;top:279px;height:16px"></i><i class="bar" style="left:1645.79px;top:256px;height:39px"></i><i class="bar" style="left:1658.40px;top:233px;height:62px"></i>
<div class="a nw" style="left:910.5px;top:322px;font-size:17px;line-height:20px;color:#4e5969">0:00</div>
<div class="a nw" style="left:1637.5px;top:322px;font-size:17.7px;line-height:20px;color:#4e5969">3:09</div>
<svg style="left:1185px;top:383px" width="16" height="16" viewBox="0 0 16 16"><path d="M1.8 1 L1.8 15" stroke="#4b5159" stroke-width="1.6" stroke-linecap="round"/><path d="M14.2 1.4 L4.4 8 L14.2 14.6 Z" fill="none" stroke="#4b5159" stroke-width="1.5" stroke-linejoin="round"/></svg>
<div class="a" style="left:1233px;top:363px;width:56px;height:56px;border-radius:50%;background:linear-gradient(135deg,#3a82f4 0%,#2166e3 50%,#1456d2 100%);box-shadow:0 4px 12px rgba(31,94,224,.25)"></div>
<svg style="left:1254.5px;top:380.5px" width="17" height="21" viewBox="0 0 17 21"><path d="M1.5 1.5 L15.5 10.5 L1.5 19.5 Z" fill="none" stroke="#fff" stroke-width="2" stroke-linejoin="round"/></svg>
<svg style="left:1321.5px;top:383px" width="16" height="16" viewBox="0 0 16 16"><path d="M14.2 1 L14.2 15" stroke="#4b5159" stroke-width="1.6" stroke-linecap="round"/><path d="M1.8 1.4 L11.6 8 L1.8 14.6 Z" fill="none" stroke="#4b5159" stroke-width="1.5" stroke-linejoin="round"/></svg>
<div class="a nw" style="left:1381.5px;top:381.5px;font-size:16px;line-height:19px;color:#3d434b;font-weight:bold">1x</div>
<div class="a" style="left:868px;top:454px;width:850px;height:411px;overflow:hidden"><div class="a" style="left:10px;top:10px;width:827px;height:460px;border-radius:18px;background:#fff;border:1px solid #eceef1;box-shadow:0 2px 8px rgba(0,0,0,.05)"></div></div>
<div class="a" style="left:906px;top:493px;width:771px;height:54px;border-radius:20px;background:#f5f7fa;border:1px solid #d6e5fb"></div>
<div class="a" style="left:1294px;top:498px;width:378px;height:44px;border-radius:16px;background:#dfedfd"></div>
<div class="a nw" style="left:1084px;top:513.5px;font-size:16px;line-height:16px;color:#4e5969;">大纲</div>
<div class="a nw" style="left:1466.5px;top:513.5px;font-size:16px;line-height:16px;color:#1a5fd0;">脚本</div>
<div class="av" style="top:593px;background:#e7f4ea;color:#18a048">G</div>
<div class="a nw" style="left:966px;top:598.0px;font-size:16px;line-height:16px;color:#18a048;font-weight:bold;">嘉宾</div>
<div class="para" style="top:623px">确实如此，而且他还统一度量衡和文字。你知道吗，那时候各地用的度量单位、写的字都不一样，交流起来特别麻烦。秦始皇就下令统一了这些标准，特别是推广了一种叫小篆的文字作为官方书写体系。</div>
<div class="av" style="top:739px;background:#e5effb;color:#1e88e5">H</div>
<div class="a nw" style="left:966px;top:744.0px;font-size:16px;line-height:16px;color:#1e88e5;font-weight:bold;">主持人</div>
<div class="para" style="top:768px">哇，这个动作挺大的，感觉就像是在建立一套新的规则。</div>
<div class="a" style="left:900px;top:820px;width:300px;height:45px;overflow:hidden"><div class="av" style="left:18px;top:13px;background:#e7f4ea;color:#18a048">G</div><div class="a nw" style="left:66px;top:18.5px;font-size:16px;line-height:16px;color:#18a048;font-weight:bold">嘉宾</div></div>
</body>
</html>
